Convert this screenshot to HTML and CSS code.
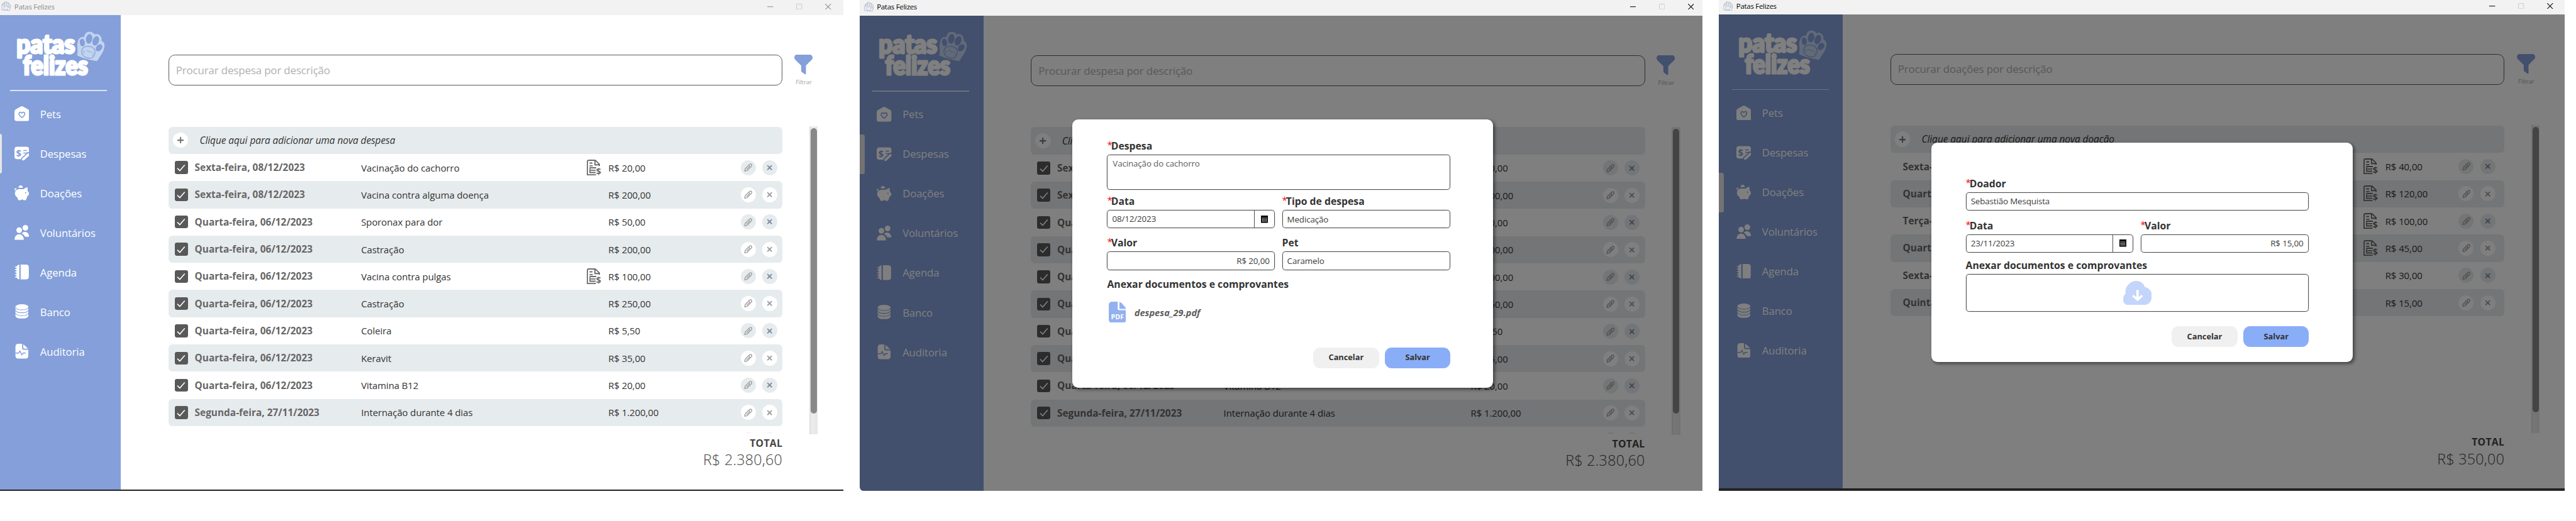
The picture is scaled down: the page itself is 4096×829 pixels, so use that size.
FILE: index.html
```html
<!DOCTYPE html>
<html lang="pt-BR">
<head>
<meta charset="utf-8">
<title>Patas Felizes</title>
<link rel="stylesheet" href="styles.css">
</head>
<body>
<svg class="defs" aria-hidden="true">
  <symbol id="paw-line" viewBox="0 0 20 20">
    <g fill="#f7f8fb" stroke="#a9b2c6" stroke-width="1.1">
      <path d="M1.2 17.5 1 10 2 6Q3.500 3 5.500 4 6 .8 9 .8 11.800.8 12.500 3 15.500 2 16.500 6 19.500 6.500 19.200 10L16.500 18.800Z"/>
      <ellipse cx="4.300" cy="7.500" rx="1.500" ry="2.600"/><ellipse cx="8.500" cy="5.200" rx="1.900" ry="3"/><ellipse cx="12.800" cy="6" rx="1.800" ry="2.900"/><ellipse cx="16" cy="10.500" rx="1.600" ry="2.200"/>
      <ellipse cx="9.300" cy="13.800" rx="4.700" ry="3.800"/>
    </g>
    <path d="M7 13.500l1.300.6 1.400-.8 1.500.9" fill="none" stroke="#a9b2c6" stroke-width=".8"/>
  </symbol>
  <symbol id="paw" viewBox="0 0 56 61">
    <path d="M0 48.500Q2 42 .5 31 0 22 4 15 8 9.500 14 11.500 16 0 26 .5 33 1 35 6.500 40 3.500 46 7.500 50.500 12 49.500 19 56.500 22 55.500 31 54 40 49.500 46L40.500 60Q18 57 0 48.500Z" fill="#c2d4ee"/>
    <g fill="#849fda"><ellipse cx="10.700" cy="22.500" rx="5" ry="7.800" transform="rotate(-8 10.700 22.500)"/><ellipse cx="24.500" cy="15" rx="6.300" ry="9.800" transform="rotate(10 24.500 15)"/><ellipse cx="38" cy="19" rx="6.300" ry="9.800" transform="rotate(20 38 19)"/><ellipse cx="44.500" cy="33" rx="5.800" ry="8" transform="rotate(42 44.500 33)"/></g>
    <path d="M9.500 38Q12 30 22 30 34 30 36.500 40 37 48 31 53 24 56 15 51 8 46 9.500 38Z" fill="none" stroke="#849fda" stroke-width="1.400"/>
    <path d="M12 39l3.500 1.500M11.500 43.500l3.500-.5M31 45l3-1M31 48.500l3.500-.5M18.500 38q2 3 3.500.5 1.500 4 4 2.500 2 2.500 4 .5" fill="none" stroke="#849fda" stroke-width="1.100"/>
  </symbol>
  <symbol id="i-pets" viewBox="0 0 30 30">
    <path d="M12.800.7Q15-.6 17.200.7L27.500 6.500Q30 8 30 11V25.500Q30 30 25.500 30H4.500Q0 30 0 25.500V11Q0 8 2.500 6.500Z" fill="#fff"/>
    <path d="M15 23C11 20 9 18 9 15.500C9 11.800 13.300 11 15 14C16.700 11 21 11.800 21 15.500C21 18 19 20 15 23Z" fill="none" stroke="#849fda" stroke-width="2"/>
  </symbol>
  <symbol id="i-despesas" viewBox="0 0 30 30">
    <path d="M5.500 2H24.500Q30 2 30 7.500V12L14 27H5.500Q0 27 0 21.500V7.500Q0 2 5.500 2Z" fill="#fff"/>
    <path d="M18 9.500H25M18 14.500H30" stroke="#849fda" stroke-width="2"/>
    <path d="M13.500 31V25L26.500 12.800H31V20L19 31Z" fill="#849fda"/>
    <path d="M15.500 29.500V26L26.500 15.800Q28.500 14 30 15.500V19.500L19 29.500Z" fill="#fff"/>
    <text class="dollar" x="3.300" y="21" fill="#849fda">$</text>
  </symbol>
  <symbol id="i-doacoes" viewBox="0 0 30 30">
    <path d="M8 4.800Q8.500 0 12.500 0 16.500 0 17 4.800Z" fill="#fff"/>
    <path d="M1.500 10Q0 6.500 4 6.500" fill="none" stroke="#fff" stroke-width="2"/>
    <path d="M1 15Q1.500 8 9 7.500H19Q21.500 4 26.500 4V11L30 15.500V18L26 22 23 30H18.500L15.500 28 12.500 30H8L5.500 24Q.5 21 1 15Z" fill="#fff"/>
    <circle cx="22.500" cy="15" r="1.300" fill="#849fda"/>
  </symbol>
  <symbol id="i-voluntarios" viewBox="0 0 30 30">
    <g fill="#fff"><circle cx="22" cy="5.700" r="5.700"/><path d="M14.500 17Q17 14 21 14 28.500 14 30 23.800H21.500Q19 18.500 14.500 17Z"/><circle cx="9.500" cy="10.500" r="5.700"/><path d="M0 30Q1 18.700 9.500 18.700 18 18.700 19 30Z"/></g>
  </symbol>
  <symbol id="i-agenda" viewBox="0 0 30 30">
    <path d="M9.800 0V30H8.500L4 26.500V3.500L8.500 0ZM12.500 0H23.500Q29 0 29 5.500V24.500Q29 30 23.500 30H12.500Z" fill="#fff"/>
    <path d="M1 5H5M1 10H5M1 15H5M1 20H5M1 25H5" stroke="#fff" stroke-width="2"/>
  </symbol>
  <symbol id="i-banco" viewBox="0 0 30 30">
    <path d="M2 5V24Q3.500 29 15 29 26.500 29 28 24V5Z" fill="#fff"/><ellipse cx="15" cy="5.300" rx="13" ry="5.300" fill="#fff"/>
    <path d="M2 6.500Q4 11.500 15 11.500 26 11.500 28 6.500M2 12.300Q4 17.300 15 17.300 26 17.300 28 12.300M2 18.200Q4 23.200 15 23.200 26 23.200 28 18.200" fill="none" stroke="#849fda" stroke-width="1.300"/>
  </symbol>
  <symbol id="i-auditoria" viewBox="0 0 30 30">
    <path d="M8 0H15.500V9.500Q15.500 12 18 12H28V24Q28 30 22 30H8Q2 30 2 24V6Q2 0 8 0Z" fill="#fff"/><path d="M17.800.8 27.500 9.700H19Q17.800 9.700 17.800 8.500Z" fill="#fff"/>
    <path d="M2 18.800H8.500L11 14.500 14.800 22.500 17.500 18.800H22.500" fill="none" stroke="#849fda" stroke-width="1.800"/>
  </symbol>
  <symbol id="i-filtro" viewBox="0 0 37 40">
    <path d="M4 0H33Q37 1.500 37 7 36.500 10 33 12.500L23.500 22V38.500Q23 41 20.500 39L15 35Q13.800 34 13.800 32V22L4 12.500Q0 9 0 6 .5 1 4 0Z" fill="#849fda"/>
  </symbol>
  <symbol id="i-recibo" viewBox="0 0 30 32">
    <path d="M17.500 1.300H4Q1.300 1.300 1.300 4V30.700H18.500M17.500 1.300 25.500 9.500V13M16.500 1.500V10.500H25M5.500 7H11.500M5.500 12.500H12M5.500 16.500H19M6.500 18V26H18M8 21.500H18" fill="none" stroke="#6b6b6b" stroke-width="2.300"/>
    <text class="dollar big" x="18.800" y="30.500" fill="#6b6b6b">$</text>
  </symbol>
  <symbol id="i-editar" viewBox="0 0 18 18">
    <g fill="none" stroke="#9c9c9c" stroke-width="1.700" stroke-linejoin="round"><path d="M1.500 16.500 2.500 11.500 10.500 3.200Q14 .2 16 2 17.800 4 15 7.200L7 15.200Z"/><path d="M10.500 3.500 12.500 8M5.500 13 12.500 6"/></g>
  </symbol>
  <symbol id="i-calendario" viewBox="0 0 14 15">
    <path d="M0 0H14V15H0Z" fill="#000"/><path d="M2 5.300H12M2 8.300H12M2 11.300H12" stroke="#fff" stroke-width="1.600" stroke-dasharray="1.700 1"/>
  </symbol>
  <symbol id="i-pdf" viewBox="0 0 35 43">
    <path d="M7 0H18V13.500Q18 17 21.500 17H35V36Q35 43 28 43H7Q0 43 0 36V7Q0 0 7 0Z" fill="#93b1ee"/><path d="M21.500.5Q24 1 26 3L34 12Q34.800 13 35 14.500H23Q21.500 14.500 21.500 13Z" fill="#93b1ee"/>
    <text class="pdf" x="4.500" y="36" fill="#fff" textLength="26">PDF</text>
  </symbol>
  <symbol id="i-nuvem" viewBox="0 0 58 49">
    <path d="M10 49Q0 48 0 37 0 29 5 26 3 17 9 9 16 0 26 0 39 0 44 12.500 58 16 58 31 57 47 43 49Z" fill="#c3d5fb"/>
    <path d="M29 18.500V36M19.500 29.500 29 38 38.500 29.500" fill="none" stroke="#fff" stroke-width="4.600"/>
  </symbol>
</svg>
<main class="board" id="board"></main>
<script src="app.js"></script>
</body>
</html>
```
FILE: styles.css
```css
* { box-sizing: border-box; }
body { margin: 0; background: #fff; overflow: hidden; font-family: "Open Sans", "Noto Sans", sans-serif; }
svg { display: block; }
.defs { position: absolute; width: 0; height: 0; }
.dollar { font: 700 19px "Open Sans", sans-serif; }
.dollar.big { font-size: 18px; }
.pdf { font: 700 13.500px "Open Sans", sans-serif; }

.board { zoom: 0.7877; width: 5200px; height: 1053px; display: flex; align-items: flex-start; }

/* Windows */
.window { position: relative; display: flex; flex-direction: column; overflow: hidden; flex: none; --bar: 31px; }
.w1 { width: 1702px; height: 992px; border-bottom: 2.600px solid #222; color: #333; }
.w2 { width: 1701px; height: 992px; margin-left: 33px; --bar: 32px; --pad: 6px; border-radius: 0 0 0 8px; }
.w3 { width: 1707px; height: 992px; margin-left: 34px; --bar: 29px; --pad: 6px; border-bottom: 5.100px solid #222; }
.titlebar { height: var(--bar); flex: none; display: flex; align-items: center; background: #f2f2f2; padding: 0 0 5px calc(3px + var(--pad, 0px)); font-size: 14.500px; letter-spacing: -0.330px; color: #000; }
.w1 .titlebar { color: #8c8c8c; }
.titlebar .mark { width: 20px; height: 20px; margin-right: 6px; }
.controls { margin-left: auto; width: 153px; flex: none; display: flex; align-items: center; gap: 46.500px; }
.w2 .controls { width: 146px; }
.w3 .controls { width: 152px; }
.controls svg { width: 12px; height: 12px; }
.body { position: relative; flex: 1; display: flex; min-height: 0; }

/* Sidebar */
.sidebar { width: calc(244px + var(--pad, 0px)); flex: none; background: #849fda; padding-left: var(--pad, 0px); }
.logo { height: 151px; padding: 32px 0 0 30px; }
.logo svg { width: 184px; height: 96px; overflow: visible; }
.logo text { font: 900 53px Lato, sans-serif; fill: #fff; stroke: #fff; stroke-width: 4px; stroke-linejoin: round; }
.rule { height: 2px; width: 196px; margin: 0 0 7px 20px; background: #dbe3f4; }
.nav { display: flex; flex-direction: column; }
.nav a { position: relative; height: 80px; display: flex; align-items: center; gap: 22px; padding: 0 0 2px 29px; font-size: 21.200px; letter-spacing: -0.100px; color: #fff; }
.nav svg { width: 30px; height: 30px; }
.nav a.on::before { content: ""; position: absolute; left: calc(0px - var(--pad, 0px)); top: 0; width: calc(4px + var(--pad, 0px)); height: 80px; border-radius: 0 4px 4px 0; background: #e6e6e6; }

/* Content */
.content { flex: 1; padding: 80px 0 0 96px; }
.top { display: flex; gap: 24px; height: 62px; }
.search { width: 1239.500px; flex: none; border: 2px solid #5a5a5a; border-radius: 13px; display: flex; align-items: center; padding: 0 0 1px 14px; font-size: 21.500px; letter-spacing: -0.200px; color: #b0b0b0; }
.filter { width: 38px; font-size: 12.500px; letter-spacing: -0.250px; color: #a6a6a6; text-align: center; line-height: 17px; }
.filter svg { width: 37px; height: 40px; margin-bottom: 7px; }
.w3 .filter { margin-left: 1px; }
.middle { display: flex; margin-top: 82px; }
.list { width: 1239.500px; height: 620px; overflow: hidden; flex: none; padding-top: 1px; }
.scroll { width: 17px; height: 622px; margin-left: 54.500px; background: linear-gradient(90deg, #dcdcdc, #ececec 30%, #e6e6e6); padding: 4px 2px 0; }
.thumb { height: 576px; border-radius: 7px; background: #888; }
.row { height: 55px; display: grid; grid-template-columns: 53px 336px 455px 44px 267px 43.500px auto; align-items: center; font-size: 19px; letter-spacing: -0.100px; border-radius: 8px; color: #333; white-space: nowrap; }
.w3 .row { grid-template-columns: 25px 336px 594px 44px 148px 44px auto; }
.row:nth-child(odd) { background: #e6ebed; }
.row.ghost { background: none; }
.row.add { font-size: 19.600px; font-style: italic; letter-spacing: -0.080px; display: flex; padding-left: 9px; gap: 23px; }
.plus { width: 31px; height: 31px; border-radius: 50%; background: #fff; display: grid; place-items: center; }
.plus svg { width: 13px; height: 13px; }
.check { width: 26px; height: 26px; margin-left: 13px; border-radius: 4px; background: #595959; display: grid; place-items: center; }
.check svg { width: 20px; height: 20px; }
.date { font-weight: 700; font-size: 19.500px; letter-spacing: 0.040px; color: #666; }
.doc svg { width: 30px; height: 32px; margin-top: -1px; }
.round { width: 30.500px; height: 30.500px; border-radius: 50%; display: grid; place-items: center; background: #e6ebed; color: #7d89a3; }
.row:nth-child(odd) .round { background: #fff; color: #9c9c9c; }
.row.ghost .round { background: #e6ebed; }
.round .pen { width: 17px; height: 17px; }
.round .x { width: 12px; height: 12px; }
.total { width: 1239.500px; text-align: right; color: #444; padding-top: 5px; }
.total b { display: block; font-size: 20px; line-height: 26px; letter-spacing: 0.360px; }
.total span { display: block; font-size: 29.500px; line-height: 42px; font-weight: 300; letter-spacing: 0.350px; }
.shade { position: absolute; inset: 0; background: rgba(0, 0, 0, 0.500); }

/* Dialogs */
.dialog { position: absolute; width: 850px; background: #fff; border-radius: 12px; box-shadow: 3px 3px 7px rgba(0, 0, 0, 0.450); color: #333; }
.d2 { left: 429px; top: 209px; height: 542px; padding: 42px 86px 0 71px; }
.d3 { left: 429px; top: 259px; height: 443px; padding: 71px 88px 0 69px; }
.dialog label { display: block; font-size: 20px; font-weight: 700; height: 29px; line-height: 25px; }
.dialog label i { display: inline-block; width: 8px; font-style: normal; font-weight: 400; font-size: 19px; color: red; vertical-align: 3px; line-height: 1; }
.pair { display: grid; grid-template-columns: 338px 339px; gap: 15px; }
.box { height: 37.500px; border: 1.500px solid #505050; border-radius: 6px; box-shadow: 0 0 2px rgba(0, 0, 0, 0.350); display: flex; align-items: center; padding: 0 9px; font-size: 17px; letter-spacing: -0.180px; color: #3c3c3c; }
.box.area { height: 71px; align-items: flex-start; padding: 6px 10px; color: #5c5c5c; }
.box.money { justify-content: flex-end; }
.box.day { padding-right: 0; justify-content: space-between; align-items: stretch; line-height: 33px; }
.box.day span { width: 40px; border-left: 1.500px solid #505050; display: grid; place-items: center; }
.box.day svg { width: 14px; height: 15px; }
.file { display: flex; align-items: center; gap: 17px; margin: 17px 0 50px 3px; font: italic 700 18.500px "Open Sans", sans-serif; color: #5c5c5c; }
.file svg { width: 35px; height: 43px; }
.drop { height: 76px; justify-content: center; margin-bottom: 30px; }
.drop svg { width: 58px; height: 49px; }
.buttons { display: flex; justify-content: flex-end; gap: 12px; }
.buttons button { width: 132.500px; height: 42px; border: 0; border-radius: 14px; font: 700 16.300px "Open Sans", sans-serif; letter-spacing: -0.050px; color: #333; background: #f0f0f0; padding: 0 0 3px; }
.buttons button.ok { background: #8aadf7; }
.d2 .field { margin-bottom: 12px; }
.d2 .pair { margin-bottom: 17.500px; }
.d3 .field { margin-bottom: 18.500px; }
.d3 .pair { margin-bottom: 14px; }
```
FILE: app.js
```js
const icon = (id, cls = '') => `<svg class="${cls}"><use href="#${id}"/></svg>`;
const cross = '<svg class="x" viewBox="0 0 12 12"><path d="M1.500 1.500 10.500 10.500M10.500 1.500 1.500 10.500" stroke="currentColor" stroke-width="2.300"/></svg>';

const nav = ['Pets', 'Despesas', 'Doações', 'Voluntários', 'Agenda', 'Banco', 'Auditoria'];
const navIcons = ['pets', 'despesas', 'doacoes', 'voluntarios', 'agenda', 'banco', 'auditoria'];

const expenses = [
  ['Sexta-feira, 08/12/2023', 'Vacinação do cachorro', 'R$ 20,00', true],
  ['Sexta-feira, 08/12/2023', 'Vacina contra alguma doença', 'R$ 200,00'],
  ['Quarta-feira, 06/12/2023', 'Sporonax para dor', 'R$ 50,00'],
  ['Quarta-feira, 06/12/2023', 'Castração', 'R$ 200,00'],
  ['Quarta-feira, 06/12/2023', 'Vacina contra pulgas', 'R$ 100,00', true],
  ['Quarta-feira, 06/12/2023', 'Castração', 'R$ 250,00'],
  ['Quarta-feira, 06/12/2023', 'Coleira', 'R$ 5,50'],
  ['Quarta-feira, 06/12/2023', 'Keravit', 'R$ 35,00'],
  ['Quarta-feira, 06/12/2023', 'Vitamina B12', 'R$ 20,00'],
  ['Segunda-feira, 27/11/2023', 'Internação durante 4 dias', 'R$ 1.200,00'],
];
const donations = [
  ['Sexta-', '', 'R$ 40,00', true],
  ['Quarta', '', 'R$ 120,00', true],
  ['Terça-', '', 'R$ 100,00', true],
  ['Quarta', '', 'R$ 45,00', true],
  ['Sexta-', '', 'R$ 30,00'],
  ['Quinta', '', 'R$ 15,00'],
];

const actions = `<span class="round">${icon('i-editar', 'pen')}</span><span class="round">${cross}</span>`;
const check = '<span class="check"><svg viewBox="0 0 20 20"><path d="M2.500 11 7.500 16 17.500 4.500" fill="none" stroke="#fff" stroke-width="2"/></svg></span>';

const row = checked => ([date, text, value, doc]) => `<div class="row">
  <span>${checked ? check : ''}</span><span class="date">${date}</span><span>${text}</span>
  <span class="doc">${doc ? icon('i-recibo') : ''}</span><span>${value}</span>${actions}</div>`;

const view = w => `<section class="window ${w.cls}">
  <header class="titlebar">${icon('paw-line', 'mark')}Patas Felizes
    <div class="controls">
      <svg viewBox="0 0 12 12"><path d="M0 6H12" stroke="currentColor" stroke-width="1.300"/></svg>
      <svg viewBox="0 0 12 12"><rect x=".7" y=".7" width="10.600" height="10.600" rx="1" fill="none" stroke="#c8c8c8" stroke-width="1.200"/></svg>
      <svg viewBox="0 0 12 12"><path d="M0 0 12 12M12 0 0 12" stroke="currentColor" stroke-width="1.300"/></svg>
    </div>
  </header>
  <div class="body">
    <aside class="sidebar">
      <div class="logo"><svg viewBox="0 0 184 96">
        <text x="3" y="45" textLength="118" lengthAdjust="spacingAndGlyphs">patas</text>
        <text x="16" y="88" textLength="131" lengthAdjust="spacingAndGlyphs">felizes</text>
        <use href="#paw" x="125" y="0" width="56" height="61"/></svg></div>
      <div class="rule"></div>
      <nav class="nav">${nav.map((n, i) => `<a class="${i === w.on ? 'on' : ''}">${icon('i-' + navIcons[i])}${n}</a>`).join('')}</nav>
    </aside>
    <div class="content">
      <div class="top"><div class="search">${w.search}</div><div class="filter">${icon('i-filtro')}Filtrar</div></div>
      <div class="middle">
        <div class="list">
          <div class="row add"><span class="plus"><svg viewBox="0 0 13 13"><path d="M6.500 0V13M0 6.500H13" stroke="#777" stroke-width="2.600"/></svg></span>${w.add}</div>
          ${w.rows.map(row(w.checked)).join('')}
          ${w.checked ? `<div class="row ghost"><i></i><i></i><i></i><i></i><i></i>${actions}</div>` : ''}
        </div>
        <div class="scroll"><div class="thumb"></div></div>
      </div>
      <div class="total"><b>TOTAL</b><span>${w.total}</span></div>
    </div>
    ${w.dialog ? `<div class="shade"></div>${w.dialog}` : ''}
  </div>
</section>`;

const label = (text, required = true) => `<label>${required ? '<i>*</i>' : ''}${text}</label>`;
const day = d => `<div class="box day">${d}<span>${icon('i-calendario')}</span></div>`;
const buttons = '<div class="buttons"><button>Cancelar</button><button class="ok">Salvar</button></div>';

const expenseDialog = `<div class="dialog d2">
  <div class="field">${label('Despesa')}<div class="box area">Vacinação do cachorro</div></div>
  <div class="pair"><div>${label('Data')}${day('08/12/2023')}</div><div>${label('Tipo de despesa')}<div class="box">Medicação</div></div></div>
  <div class="pair"><div>${label('Valor')}<div class="box money">R$ 20,00</div></div><div>${label('Pet', false)}<div class="box">Caramelo</div></div></div>
  ${label('Anexar documentos e comprovantes', false)}
  <div class="file">${icon('i-pdf')}despesa_29.pdf</div>
  ${buttons}
</div>`;

const donationDialog = `<div class="dialog d3">
  <div class="field">${label('Doador')}<div class="box">Sebastião Mesquista</div></div>
  <div class="pair"><div>${label('Data')}${day('23/11/2023')}</div><div>${label('Valor')}<div class="box money">R$ 15,00</div></div></div>
  ${label('Anexar documentos e comprovantes', false)}
  <div class="box drop">${icon('i-nuvem')}</div>
  ${buttons}
</div>`;

const base = { search: 'Procurar despesa por descrição', add: 'Clique aqui para adicionar uma nova despesa', rows: expenses, checked: true, on: 1, total: 'R$ 2.380,60' };
document.getElementById('board').innerHTML = [
  { ...base, cls: 'w1' },
  { ...base, cls: 'w2', dialog: expenseDialog },
  { cls: 'w3', search: 'Procurar doações por descrição', add: 'Clique aqui para adicionar uma nova doação', rows: donations, on: 2, total: 'R$ 350,00', dialog: donationDialog },
].map(view).join('');
```
